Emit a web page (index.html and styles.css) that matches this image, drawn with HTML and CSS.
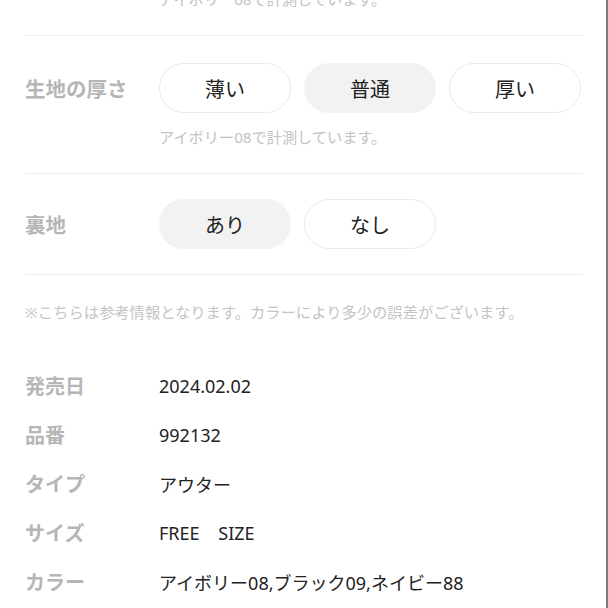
FILE: index.html
```html
<!DOCTYPE html>
<html lang="ja">
<head>
    <meta charset="UTF-8">
    <meta name="viewport" content="width=device-width, initial-scale=1.0">
    <title>商品詳細</title>
    <link rel="stylesheet" href="styles.css">
</head>
<body>

<div class="page">
    <div class="section cut">
        <p class="caption">アイボリー08で計測しています。</p>
    </div>

    <div class="section">
        <div class="choice-row">
            <div class="choice-label">生地の厚さ</div>
            <div class="pills">
                <span class="pill">薄い</span>
                <span class="pill active">普通</span>
                <span class="pill">厚い</span>
            </div>
        </div>
        <p class="caption under">アイボリー08で計測しています。</p>
    </div>

    <div class="section tight">
        <div class="choice-row">
            <div class="choice-label">裏地</div>
            <div class="pills">
                <span class="pill active">あり</span>
                <span class="pill">なし</span>
            </div>
        </div>
    </div>

    <p class="note">※こちらは参考情報となります。カラーにより多少の誤差がございます。</p>

    <dl class="specs">
        <div class="spec">
            <dt>発売日</dt>
            <dd>2024.02.02</dd>
        </div>
        <div class="spec">
            <dt>品番</dt>
            <dd>992132</dd>
        </div>
        <div class="spec">
            <dt>タイプ</dt>
            <dd>アウター</dd>
        </div>
        <div class="spec">
            <dt>サイズ</dt>
            <dd>FREE&nbsp;&nbsp;&nbsp;&nbsp;SIZE</dd>
        </div>
        <div class="spec">
            <dt>カラー</dt>
            <dd>アイボリー08,ブラック09,ネイビー88</dd>
        </div>
    </dl>
</div>

</body>
</html>
```

FILE: styles.css
```css
html, body {
    margin: 0;
    padding: 0;
    background-color: #fff;
}
body {
    font-family: "Noto Sans", "Noto Sans CJK JP", sans-serif;
    color: #222;
}
.page {
    width: 608px;
    height: 608px;
    box-sizing: border-box;
    padding: 0 23px 0 25px;
    border-right: 2px solid #7c7c7c;
    overflow: hidden;
}
.section {
    padding: 27px 0 26px;
    border-bottom: 1px solid #ededed;
}
.section.cut {
    margin-top: -11px;
    padding-top: 0;
}
.section.tight {
    padding: 25px 0 25px;
}
.caption {
    margin: 0;
    font-size: 15.2px;
    line-height: 20px;
    color: #c2c2c2;
}
.caption.under {
    margin: 14px 0 0 134px;
}
.section.cut .caption {
    margin-left: 134px;
}
.choice-row {
    display: flex;
    align-items: center;
}
.choice-label {
    width: 134px;
    font-size: 20.5px;
    font-weight: bold;
    color: #b6b6b6;
}
.pills {
    display: flex;
    gap: 13px;
}
.pill {
    display: flex;
    align-items: center;
    justify-content: center;
    width: 132px;
    height: 50px;
    box-sizing: border-box;
    border: 1px solid #ebebeb;
    border-radius: 25px;
    font-size: 20px;
    color: #222;
}
.pill.active {
    background-color: #f2f2f2;
    border-color: #f2f2f2;
}
.note {
    margin: 27px 0 0;
    font-size: 15.3px;
    line-height: 20px;
    color: #c4c4c4;
}
.specs {
    margin: 39px 0 0;
}
.spec {
    display: flex;
    align-items: center;
    height: 49px;
}
.spec dt {
    width: 134px;
    font-size: 20px;
    font-weight: bold;
    color: #b6b6b6;
}
.spec dd {
    margin: 0;
    font-size: 18px;
    color: #222;
}
```
